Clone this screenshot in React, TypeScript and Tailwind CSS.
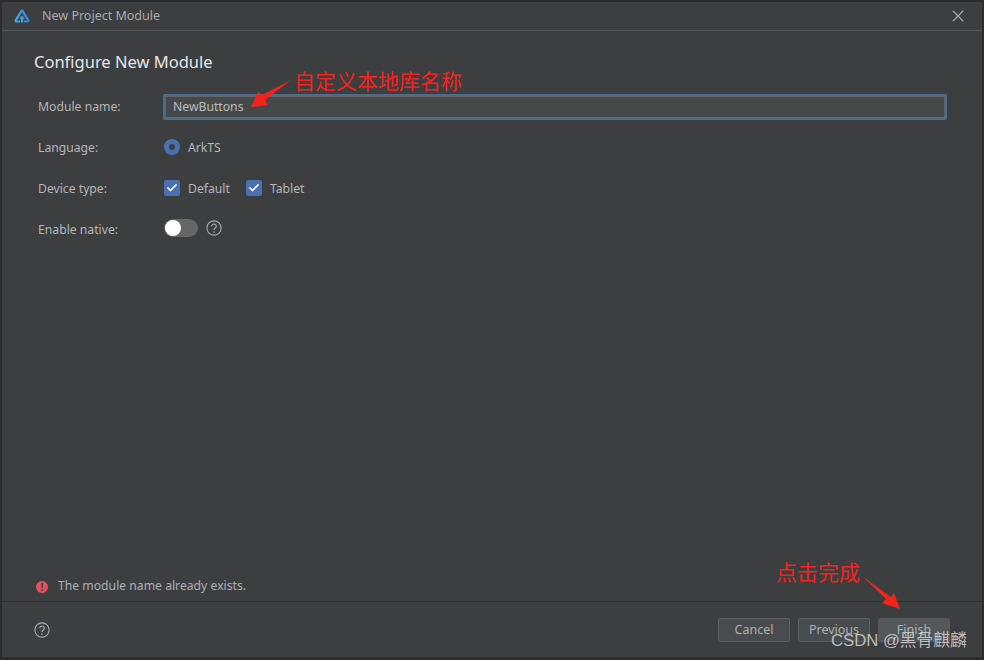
import { Check, X } from 'lucide-react';

const FONT = "font-['Noto_Sans','Noto_Sans_CJK_SC',sans-serif]";

function HelpIcon() {
  return (
    <svg width="16" height="16" viewBox="0 0 18 18" fill="none">
      <circle cx="9" cy="9" r="8" stroke="#a9abad" strokeWidth="1.2" />
      <path d="M6.5 7a2.500 2.500 0 1 1 3.900 2.100c-.9.6-1.400 1.100-1.400 2.100" stroke="#a9abad" strokeWidth="1.3" />
      <circle cx="9" cy="13.500" r=".9" fill="#a9abad" />
    </svg>
  );
}

function Logo() {
  return (
    <svg width="16" height="14" viewBox="0 0 16 14" fill="none">
      <defs>
        <linearGradient id="logo" x1="0" y1="0" x2="16" y2="0" gradientUnits="userSpaceOnUse">
          <stop offset="0" stopColor="#35b6e0" />
          <stop offset="1" stopColor="#3f76cf" />
        </linearGradient>
      </defs>
      <path
        d="M6.600 1.200c.7-1.200 2.100-1.200 2.800 0l5.900 9.600c.7 1.200 0 2.600-1.400 2.600H10V11.400h3L8 3.200 3 11.400h3v2H2.100C.7 13.400 0 12 .7 10.800z"
        fill="url(#logo)"
      />
      <path d="M8 6.400l3 3.400H9.200v3.600H6.800V9.800H5z" fill="#3fa4dc" />
    </svg>
  );
}

function Row({ label, children }: { label: string; children: React.ReactNode }) {
  return (
    <div className="flex items-center h-[26px]">
      <span className="w-[126px] shrink-0 text-[12.200px] text-[#b4b6b8]">{label}</span>
      {children}
    </div>
  );
}

function CheckBox({ label }: { label: string }) {
  return (
    <div className="flex items-center gap-2">
      <span className="w-4 h-4 -translate-y-px rounded-[2px] bg-[#4a70b3] flex items-center justify-center">
        <Check size={12} strokeWidth={3.5} className="text-white" />
      </span>
      <span className="text-[12.200px] text-[#b4b6b8]">{label}</span>
    </div>
  );
}

function FooterButton({ label, primary }: { label: string; primary?: boolean }) {
  return (
    <button
      className={`w-[72px] h-6 rounded-[2px] border text-[12.500px] text-[#aeb0b2] ${
        primary ? 'bg-[#55585a] border-[#55585a]' : 'bg-[#484c4e] border-[#5c5e60]'
      }`}
    >
      {label}
    </button>
  );
}

export default function App() {
  return (
    <div className={`relative w-[984px] h-[660px] overflow-hidden bg-[#2b2c2d] pt-[2px] pl-[2px] pr-[2px] pb-[3px] ${FONT}`}>
      <div className="h-full flex flex-col bg-[#3d3e40]">
        {/* Title bar */}
        <div className="h-[29px] shrink-0 flex items-center pl-3 pr-[14px] border-b border-[#555555]">
          <Logo />
          <span className="ml-3 text-[12.500px] text-[#a9abad]">New Project Module</span>
          <X size={20} strokeWidth={1.4} className="ml-auto text-[#a9abad]" />
        </div>

        {/* Form */}
        <div className="flex-1 flex flex-col pl-9 pr-[35px]">
          <h1 className="-ml-1 mt-[19px] text-[16.500px] leading-[24px] text-[#e4e6e8]">Configure New Module</h1>
          <div className="mt-5 flex flex-col gap-[15px]">
            <Row label="Module name:">
              <div className="flex-1 h-[26px] -ml-[1px] flex items-center pl-2 bg-[#45494a] border-2 border-[#466d94] rounded-[2px] shadow-[inset_0_0_0_1px_#646464] text-[12.200px] text-[#bbbdbf]">
                NewButtons
              </div>
            </Row>
            <Row label="Language:">
              <div className="flex items-center gap-2">
                <span className="w-4 h-4 -translate-y-px rounded-full bg-[#4a70b3] flex items-center justify-center">
                  <span className="w-[6px] h-[6px] rounded-full bg-[#3d3e40]" />
                </span>
                <span className="text-[12.200px] text-[#b4b6b8]">ArkTS</span>
              </div>
            </Row>
            <Row label="Device type:">
              <div className="flex items-center gap-4">
                <CheckBox label="Default" />
                <CheckBox label="Tablet" />
              </div>
            </Row>
            <Row label="Enable native:">
              <div className="flex items-center gap-2 -translate-y-[2px]">
                <span className="w-[34px] h-[18px] rounded-full bg-[#666666] flex items-center px-[1px]">
                  <span className="w-4 h-4 rounded-full bg-white" />
                </span>
                <HelpIcon />
              </div>
            </Row>
          </div>
        </div>

        {/* Validation message */}
        <div className="h-[30px] shrink-0 flex items-center gap-[10px] pl-[34px] pt-[1px]">
          <span className="w-3 h-3 rounded-full bg-[#e5505f] flex items-center justify-center text-[10px] leading-none font-bold text-[#3d3e40]">
            !
          </span>
          <span className="text-[12.200px] text-[#aab1b8]">The module name already exists.</span>
        </div>

        {/* Footer */}
        <div className="h-14 shrink-0 flex items-center justify-between pl-8 pr-8 border-t border-[#323232]">
          <HelpIcon />
          <div className="flex items-center gap-2 mt-[1px]">
            <FooterButton label="Cancel" />
            <FooterButton label="Previous" />
            <FooterButton label="Finish" primary />
          </div>
        </div>
      </div>

      {/* Red annotations pasted over the screenshot */}
      <span className="absolute left-[294px] top-[66px] text-[21px] leading-[28px] text-[#f5221b] font-['Noto_Sans_CJK_SC',sans-serif]">
        自定义本地库名称
      </span>
      <span className="absolute left-[776px] top-[557px] text-[21px] leading-[28px] text-[#f5221b] font-['Noto_Sans_CJK_SC',sans-serif]">
        点击完成
      </span>
      <svg className="absolute left-0 top-0" width="984" height="660" viewBox="0 0 984 660" fill="none">
        <path d="M291 80 L262 95 L258 92 L251 107 L268 105 L265 100 Z" fill="#f5221b" />
        <path d="M862 576 L891 597 L894 593 L900 609 L882 603 L886 599 Z" fill="#f5221b" />
      </svg>

      {/* Watermark */}
      <span className="absolute left-[831px] top-[630px] text-[16.700px] leading-[22px] whitespace-nowrap text-[#d4d4d4]/85 font-['Liberation_Sans','Noto_Sans_CJK_SC',sans-serif]">
        CSDN @黑骨麒麟
      </span>
    </div>
  );
}
